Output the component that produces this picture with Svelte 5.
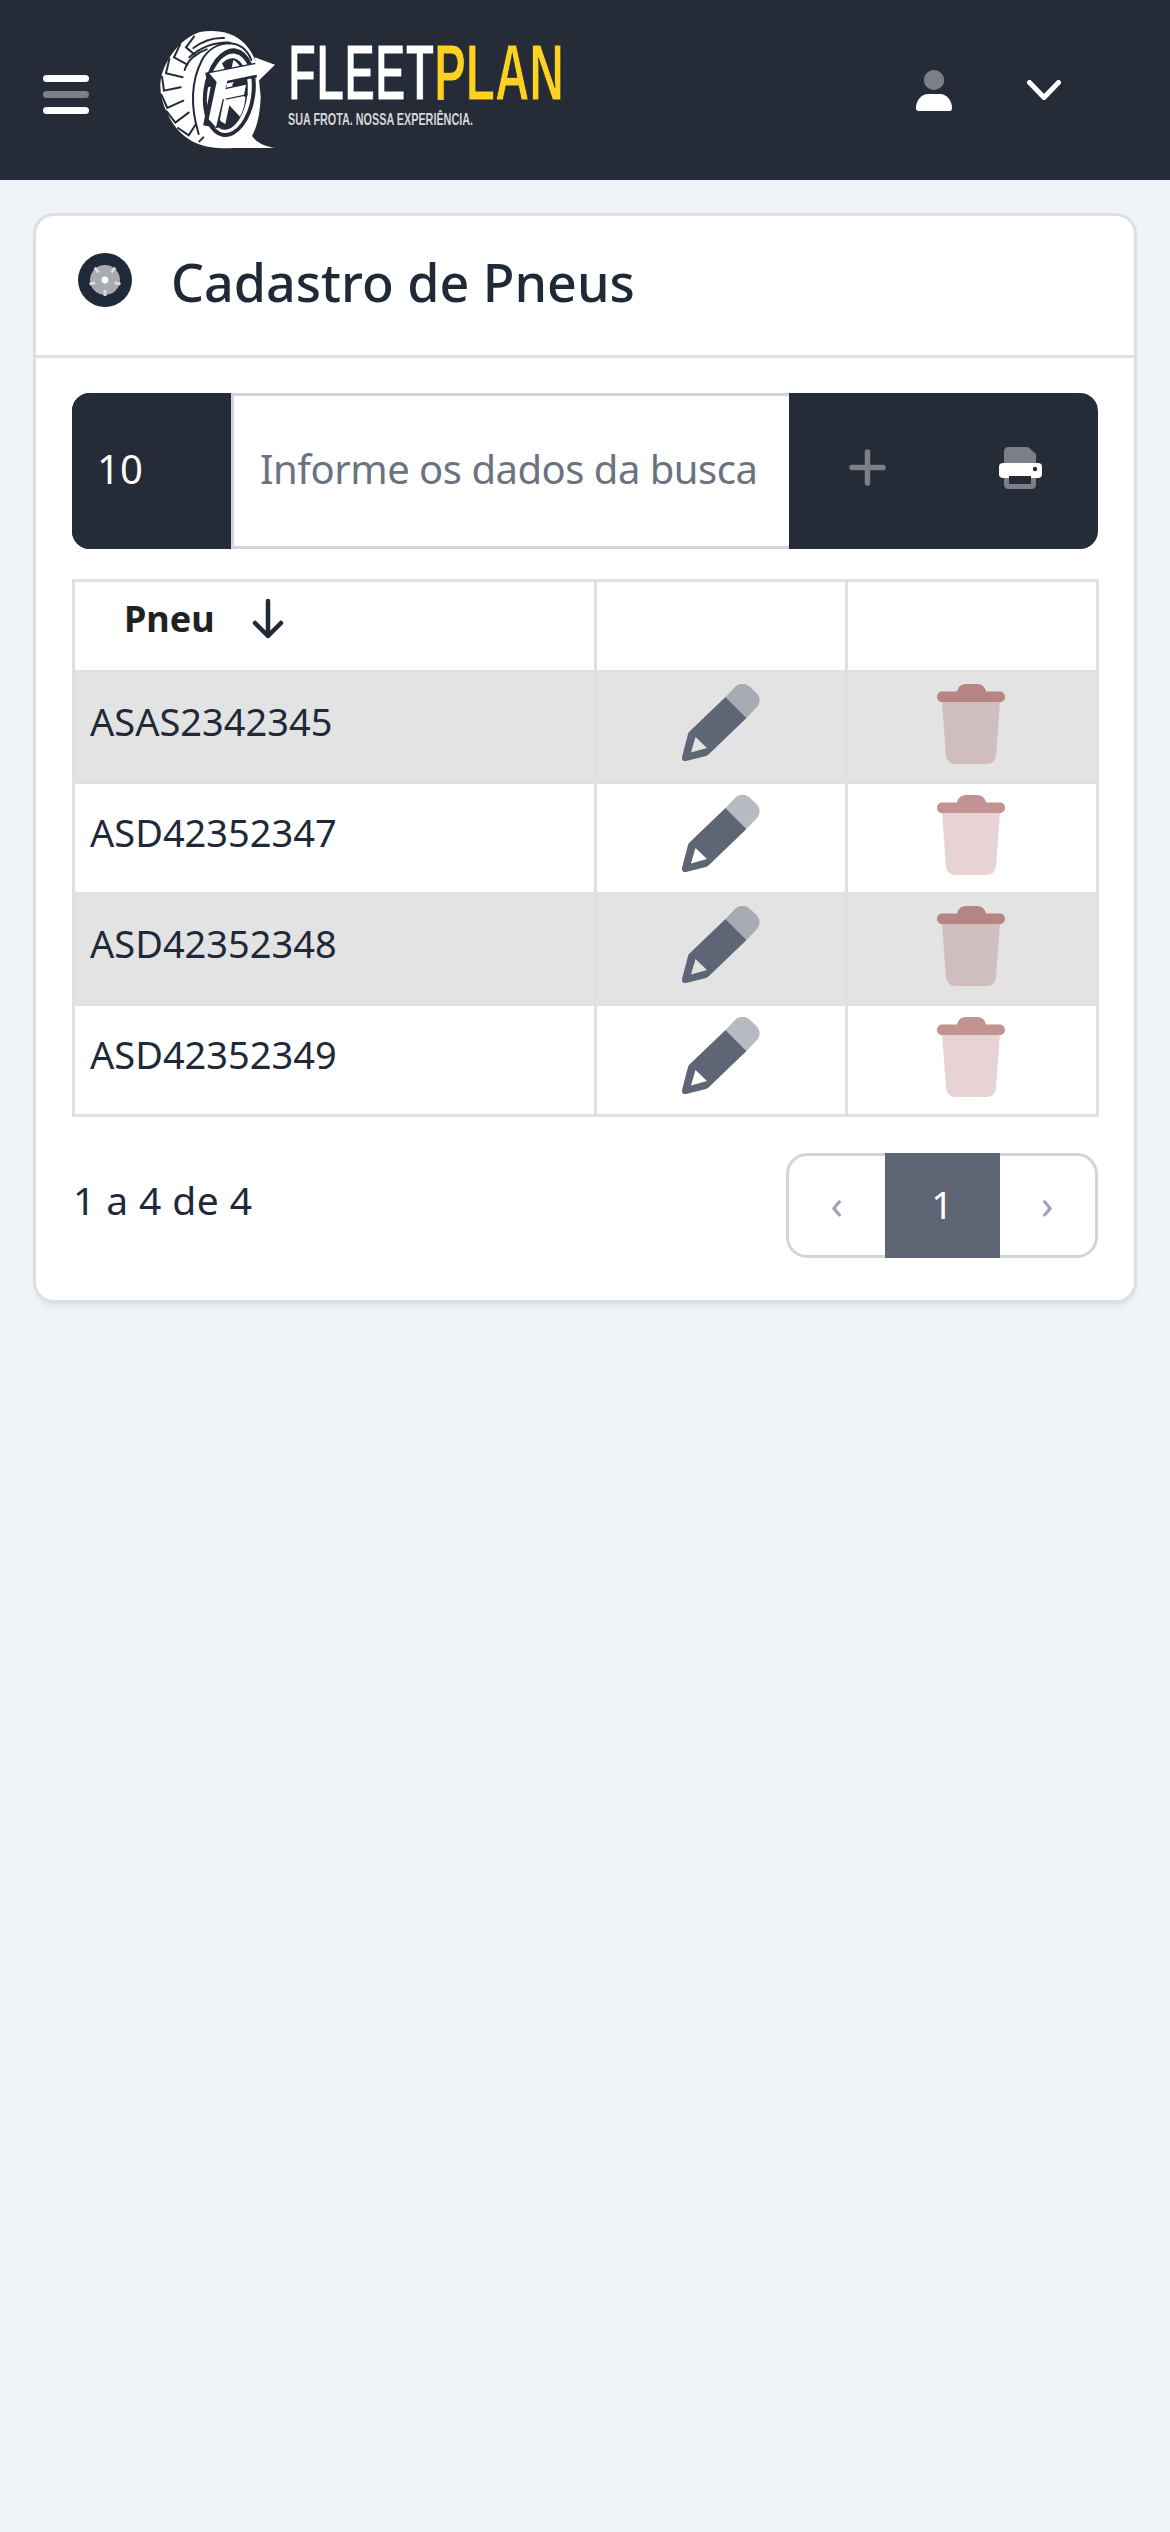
<script>
  const rows = ["ASAS2342345", "ASD42352347", "ASD42352348", "ASD42352349"];
  const spokes = [-130, -50, 15, 90, 165];
</script>

<header class="topbar">
  <button class="menu-btn" aria-label="Menu">
    <span></span>
    <span class="faded"></span>
    <span></span>
  </button>

  <div class="logo">
    <svg class="tire" viewBox="30 30 345 360" aria-hidden="true">
      <!-- tyre silhouette with the tail that runs off to the right -->
      <path fill="#fff" d="M150 36C195 28 250 34 285 72C306 95 318 120 324 150L332 230C330 280 322 320 306 348C322 370 345 378 375 384L250 384C215 386 175 384 145 372C105 358 72 325 52 280C30 235 24 190 40 150C58 105 95 55 150 36Z" />
      <g fill="none" stroke="#252b37" stroke-width="6" stroke-linecap="round">
        <path d="M132 50L108 82L136 106M90 74L72 112L112 134M58 116L48 160L98 172M36 170L42 212L92 202M34 224L52 264L100 242M50 274L76 308L116 278M84 324L116 346L138 312" />
        <path d="M130 84C160 62 190 52 222 54M118 112C150 84 190 66 240 68M104 150C112 120 140 98 170 88" />
        <path d="M146 342C124 270 120 190 156 120C174 88 205 70 240 70C270 72 292 90 304 120" />
        <path d="M160 352L148 364" />
      </g>
      <ellipse cx="238" cy="218" rx="78" ry="134" transform="rotate(8 238 218)" fill="#252b37" />
      <ellipse cx="238" cy="220" rx="66" ry="120" transform="rotate(8 238 220)" fill="#fff" />
      <ellipse cx="236" cy="222" rx="56" ry="108" transform="rotate(8 236 222)" fill="#252b37" />
      <!-- wheel spokes seen through the rim -->
      <path fill="#fff" d="M214 126L238 176L250 120C258 124 268 134 274 146L246 196L286 232C284 258 278 276 270 290L238 256L226 312C208 304 198 288 192 264L214 226L182 196C184 164 196 138 214 126Z" />
      <path fill="none" stroke="#252b37" stroke-width="44" d="M170 180L320 150" />
      <path fill="none" stroke="#252b37" stroke-width="46" d="M208 190L182 320" />
      <path fill="none" stroke="#252b37" stroke-width="36" d="M224 222L290 208" />
      <!-- F with the arrow -->
      <path fill="#fff" d="M178 160L318 132L314 112L375 134L322 186L320 164L232 182L226 208L288 194L282 224L218 238L198 322L176 298L200 186Z" />
    </svg>
    <svg class="wordmark" viewBox="0 0 276 84" aria-label="FleetPlan, sua frota, nossa experiência">
      <text class="mark" x="0" y="58" textLength="146" lengthAdjust="spacingAndGlyphs" fill="#fff">FLEET</text>
      <text class="mark" x="146" y="58" textLength="130" lengthAdjust="spacingAndGlyphs" fill="#fdd122">PLAN</text>
      <text class="tag" x="0" y="83" textLength="185" lengthAdjust="spacingAndGlyphs" fill="#d4d5d8">SUA FROTA. NOSSA EXPERIÊNCIA.</text>
    </svg>
  </div>

  <div class="user">
    <svg class="user-icon" viewBox="0 0 36 41" aria-hidden="true">
      <ellipse cx="18" cy="10" rx="10.2" ry="10" fill="#fff" opacity="0.4" />
      <path fill="#fff" d="M0 38C0 30 6 24 12 24H24C30 24 36 30 36 38C36 40 35 41 34 41H2C1 41 0 40 0 38Z" />
    </svg>
    <svg class="chevron" viewBox="0 0 34 20" aria-hidden="true">
      <path d="M2.5 2.5L17 17.5L31.5 2.5" fill="none" stroke="#fff" stroke-width="5" stroke-linecap="round" stroke-linejoin="round" />
    </svg>
  </div>
</header>

<main class="page">
  <section class="card">
    <div class="card-head">
      <svg class="wheel" viewBox="0 0 54 54" aria-hidden="true">
        <circle cx="27" cy="27" r="27" fill="#1f2937" />
        <circle cx="27" cy="27" r="15" fill="#a7aab1" />
        {#each spokes as angle (angle)}
          <path d="M37 27H43" stroke="#d9dbdf" stroke-width="3" transform="rotate({angle} 27 27)" />
        {/each}
        <circle cx="27" cy="27" r="3.4" fill="#fff" />
      </svg>
      <h1>Cadastro de Pneus</h1>
    </div>

    <div class="card-body">
      <div class="toolbar">
        <select class="page-size">
          <option>10</option>
        </select>
        <input class="search" type="text" placeholder="Informe os dados da busca" />
        <div class="tools">
          <button class="tool" aria-label="Adicionar">
            <svg class="plus" viewBox="0 0 37 37" aria-hidden="true">
              <path d="M18.5 3V34M3 18.5H34" stroke="#fff" stroke-opacity="0.4" stroke-width="5.5" stroke-linecap="round" />
            </svg>
          </button>
          <button class="tool" aria-label="Imprimir">
            <svg class="printer" viewBox="0 0 43 42" aria-hidden="true">
              <path fill="#fff" opacity="0.4" d="M9 0H29L37 7V38C37 40 35 42 33 42H9C7 42 5 40 5 38V4C5 2 7 0 9 0Z" />
              <rect x="0" y="16" width="43" height="15" rx="4" fill="#fff" />
              <rect x="10" y="29" width="22" height="8" fill="#252b37" />
              <circle cx="36" cy="22" r="2.2" fill="#252b37" />
            </svg>
          </button>
        </div>
      </div>

      <table class="grid">
        <colgroup>
          <col class="col-name" />
          <col class="col-action" />
          <col class="col-action" />
        </colgroup>
        <thead>
          <tr>
            <th>
              <div class="th-inner">
                <span>Pneu</span>
                <svg class="sort" viewBox="0 0 32 41" aria-hidden="true">
                  <path d="M16 3V38M3 25L16 38L29 25" fill="none" stroke="#1f2937" stroke-width="4.5" stroke-linecap="round" stroke-linejoin="round" />
                </svg>
              </div>
            </th>
            <th></th>
            <th></th>
          </tr>
        </thead>
        <tbody>
          {#each rows as row, i (row)}
            <tr class:striped={i % 2 === 0}>
              <td class="name">{row}</td>
              <td class="action">
                <svg class="pencil" viewBox="0 0 78 78" aria-hidden="true">
                  <path fill="#5e6676" opacity="0.45" d="M43.5 13L54 2C58-1 63-1 67 2L74.500 9C78.500 13 78.500 19 75 23L64.500 34Z" />
                  <path fill="#5e6676" fill-rule="evenodd" d="M43.500 13L64.500 34L27 70C26 71 25 71.500 24 72L4 77C1 77.500-0.500 75.500 0 73L6 50C6.500 48.500 7 48 8 47ZM13.500 53L9 68.500L25 64Z" />
                </svg>
              </td>
              <td class="action">
                <svg class="trash" viewBox="0 0 68 80" aria-hidden="true">
                  <g fill="#892727" opacity="0.5">
                    <path opacity="0.4" d="M5 17H63L59 71C58.500 76 55 80 50 80H18C13 80 9.500 76 9 71Z" />
                    <path d="M5 7.500H20C21 3 24 0 29 0H40C45 0 48 3 49 7.500H63C66 7.500 68 10 68 13C68 15.500 66 18 63 18H5C2 18 0 15.500 0 13C0 10 2 7.500 5 7.500Z" />
                  </g>
                </svg>
              </td>
            </tr>
          {/each}
        </tbody>
      </table>

      <div class="footer">
        <span class="count">1 a 4 de 4</span>
        <nav class="pager">
          <span class="page-arrow">‹</span>
          <span class="page-current">1</span>
          <span class="page-arrow">›</span>
        </nav>
      </div>
    </div>
  </section>
</main>

<style>
  :global(body) {
    margin: 0;
    background: #f0f4f8;
    font-family: "Noto Sans", "Open Sans", sans-serif;
    color: #1f2937;
  }

  .topbar {
    display: flex;
    align-items: center;
    height: 180px;
    padding: 0 109px 0 43px;
    background: #252b37;
    box-sizing: border-box;
  }

  .menu-btn {
    display: flex;
    flex-direction: column;
    gap: 9px;
    width: 46px;
    margin-top: 9px;
    padding: 0;
    border: 0;
    background: none;
  }

  .menu-btn span {
    height: 7px;
    border-radius: 4px;
    background: #fff;
  }

  .menu-btn .faded {
    opacity: 0.4;
  }

  .logo {
    display: flex;
    align-items: flex-start;
    gap: 13px;
    margin-left: 71px;
    height: 120px;
  }

  .tire {
    width: 115px;
    height: 120px;
  }

  .wordmark {
    width: 276px;
    height: 84px;
    margin-top: 12px;
    overflow: visible;
  }

  .mark {
    font-family: "Liberation Sans", sans-serif;
    font-weight: 700;
    font-size: 80px;
    stroke: currentColor;
  }

  .tag {
    font-family: "Liberation Sans", sans-serif;
    font-weight: 700;
    font-size: 17px;
  }

  .user {
    display: flex;
    align-items: center;
    gap: 75px;
    margin-left: auto;
  }

  .user-icon {
    width: 36px;
    height: 41px;
  }

  .chevron {
    width: 34px;
    height: 20px;
  }

  .page {
    padding: 36px;
  }

  .card {
    border-radius: 18px;
    background: #fff;
    box-shadow:
      0 0 0 3px #dcdfe3,
      0 5px 6px rgba(0, 0, 0, 0.1);
  }

  .card-head {
    display: flex;
    align-items: center;
    gap: 39px;
    height: 139px;
    padding-left: 42px;
    border-bottom: 3px solid #dfe1e4;
  }

  .wheel {
    width: 54px;
    height: 54px;
    margin-top: -12px;
  }

  h1 {
    margin: -6px 0 0;
    font-size: 52px;
    font-weight: 500;
    line-height: 1.2;
    color: #1f2937;
  }

  .card-body {
    padding: 35px 36px 42px;
  }

  .toolbar {
    display: flex;
    height: 156px;
    border-radius: 18px;
    overflow: hidden;
    background: #252b37;
  }

  .page-size {
    width: 159px;
    padding: 0 0 6px 25px;
    border: 0;
    appearance: none;
    background: #252b37;
    color: #fff;
    font: 400 40px "Noto Sans", sans-serif;
  }

  .search {
    flex: 1;
    min-width: 0;
    padding: 0 0 6px 26px;
    border: 3px solid #d1d5db;
    border-right: 0;
    background: #fff;
    box-sizing: border-box;
    font: 400 40px "Noto Sans", sans-serif;
    letter-spacing: -0.5px;
    color: #1f2937;
  }

  .search::placeholder {
    color: #6b7280;
    opacity: 1;
  }

  .tools {
    display: flex;
    align-items: center;
    width: 309px;
    padding: 0 0 7px 60px;
    gap: 113px;
    box-sizing: border-box;
  }

  .tool {
    display: flex;
    padding: 0;
    border: 0;
    background: none;
  }

  .plus {
    width: 37px;
    height: 37px;
  }

  .printer {
    width: 43px;
    height: 42px;
  }

  .grid {
    width: calc(100% - 2px);
    margin-top: 30px;
    border-collapse: collapse;
    table-layout: fixed;
  }

  .col-name {
    width: 522px;
  }

  .col-action {
    width: 251px;
  }

  th,
  td {
    padding: 0;
    border: 3px solid #dfe0e2;
  }

  th {
    height: 88px;
    text-align: left;
    font-size: 36px;
    font-weight: 700;
    color: #1f2222;
  }

  .th-inner {
    display: flex;
    align-items: center;
    gap: 37px;
    padding: 0 0 16px 49px;
  }

  .sort {
    width: 32px;
    height: 41px;
  }

  tbody tr {
    height: 111px;
  }

  .striped {
    background: #e3e3e3;
  }

  .name {
    padding: 0 0 12px 15px;
    font-size: 38px;
    color: #1f2937;
  }

  .action {
    text-align: center;
    line-height: 0;
  }

  .pencil {
    width: 78px;
    height: 78px;
    margin-bottom: 8px;
  }

  .trash {
    width: 68px;
    height: 80px;
    margin: 0 0 6px -2px;
  }

  .footer {
    display: flex;
    align-items: center;
    justify-content: space-between;
    margin-top: 36px;
  }

  .count {
    margin: -12px 0 0 1px;
    font-size: 39px;
    letter-spacing: 0.4px;
  }

  .pager {
    display: flex;
    width: 312px;
    height: 105px;
    border: 3px solid #d1d5db;
    border-radius: 21px;
    box-sizing: border-box;
  }

  .pager span {
    display: flex;
    align-items: center;
    justify-content: center;
  }

  .page-arrow {
    flex: 1;
    padding-bottom: 5px;
    font-size: 40px;
    color: #9ca3af;
  }

  .page-current {
    width: 115px;
    margin: -3px 0;
    padding-bottom: 4px;
    background: #5e6675;
    color: #fff;
    font-size: 38px;
  }
</style>
